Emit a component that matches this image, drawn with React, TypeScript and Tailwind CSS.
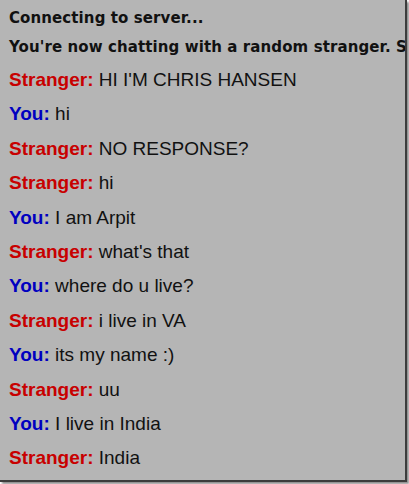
import React from "react";

type Msg = { who: "Stranger" | "You"; text: string };

const msgs: Msg[] = [
  { who: "Stranger", text: "HI I'M CHRIS HANSEN" },
  { who: "You", text: "hi" },
  { who: "Stranger", text: "NO RESPONSE?" },
  { who: "Stranger", text: "hi" },
  { who: "You", text: "I am Arpit" },
  { who: "Stranger", text: "what's that" },
  { who: "You", text: "where do u live?" },
  { who: "Stranger", text: "i live in VA" },
  { who: "You", text: "its my name :)" },
  { who: "Stranger", text: "uu" },
  { who: "You", text: "I live in India" },
  { who: "Stranger", text: "India" },
];

export default function App() {
  return (
    <div className="w-[409px] h-[484px] bg-white overflow-hidden">
      <div className="w-[407px] h-[482px] bg-[#b5b5b5] border-r-2 border-b-2 border-[#3c3c3c] shadow-[2px_2px_2px_rgba(0,0,0,0.45)] overflow-hidden">
        <div className="pl-[9px] pt-[9px] whitespace-nowrap">
          <div className="font-['DejaVu_Sans',sans-serif] font-bold text-[15px] leading-[18px] tracking-[0.1px] text-[#111]">
            Connecting to server...
          </div>
          <div className="mt-[11px] font-['DejaVu_Sans',sans-serif] font-bold text-[15px] leading-[18px] tracking-[0.1px] text-[#111]">
            You're now chatting with a random stranger. Say hi!
          </div>
          <div className="mt-[13px] flex flex-col font-['Liberation_Sans',Arial,sans-serif] text-[19px] leading-[22px]">
            {msgs.map((m, i) => (
              <div key={i} className={i === 0 ? "" : "mt-[12.4px]"}>
                <span
                  className={
                    "font-bold " +
                    (m.who === "Stranger" ? "text-[#c80000]" : "text-[#0000c0]")
                  }
                >
                  {m.who}:
                </span>{" "}
                <span className="text-[#111]">{m.text}</span>
              </div>
            ))}
          </div>
        </div>
      </div>
    </div>
  );
}
